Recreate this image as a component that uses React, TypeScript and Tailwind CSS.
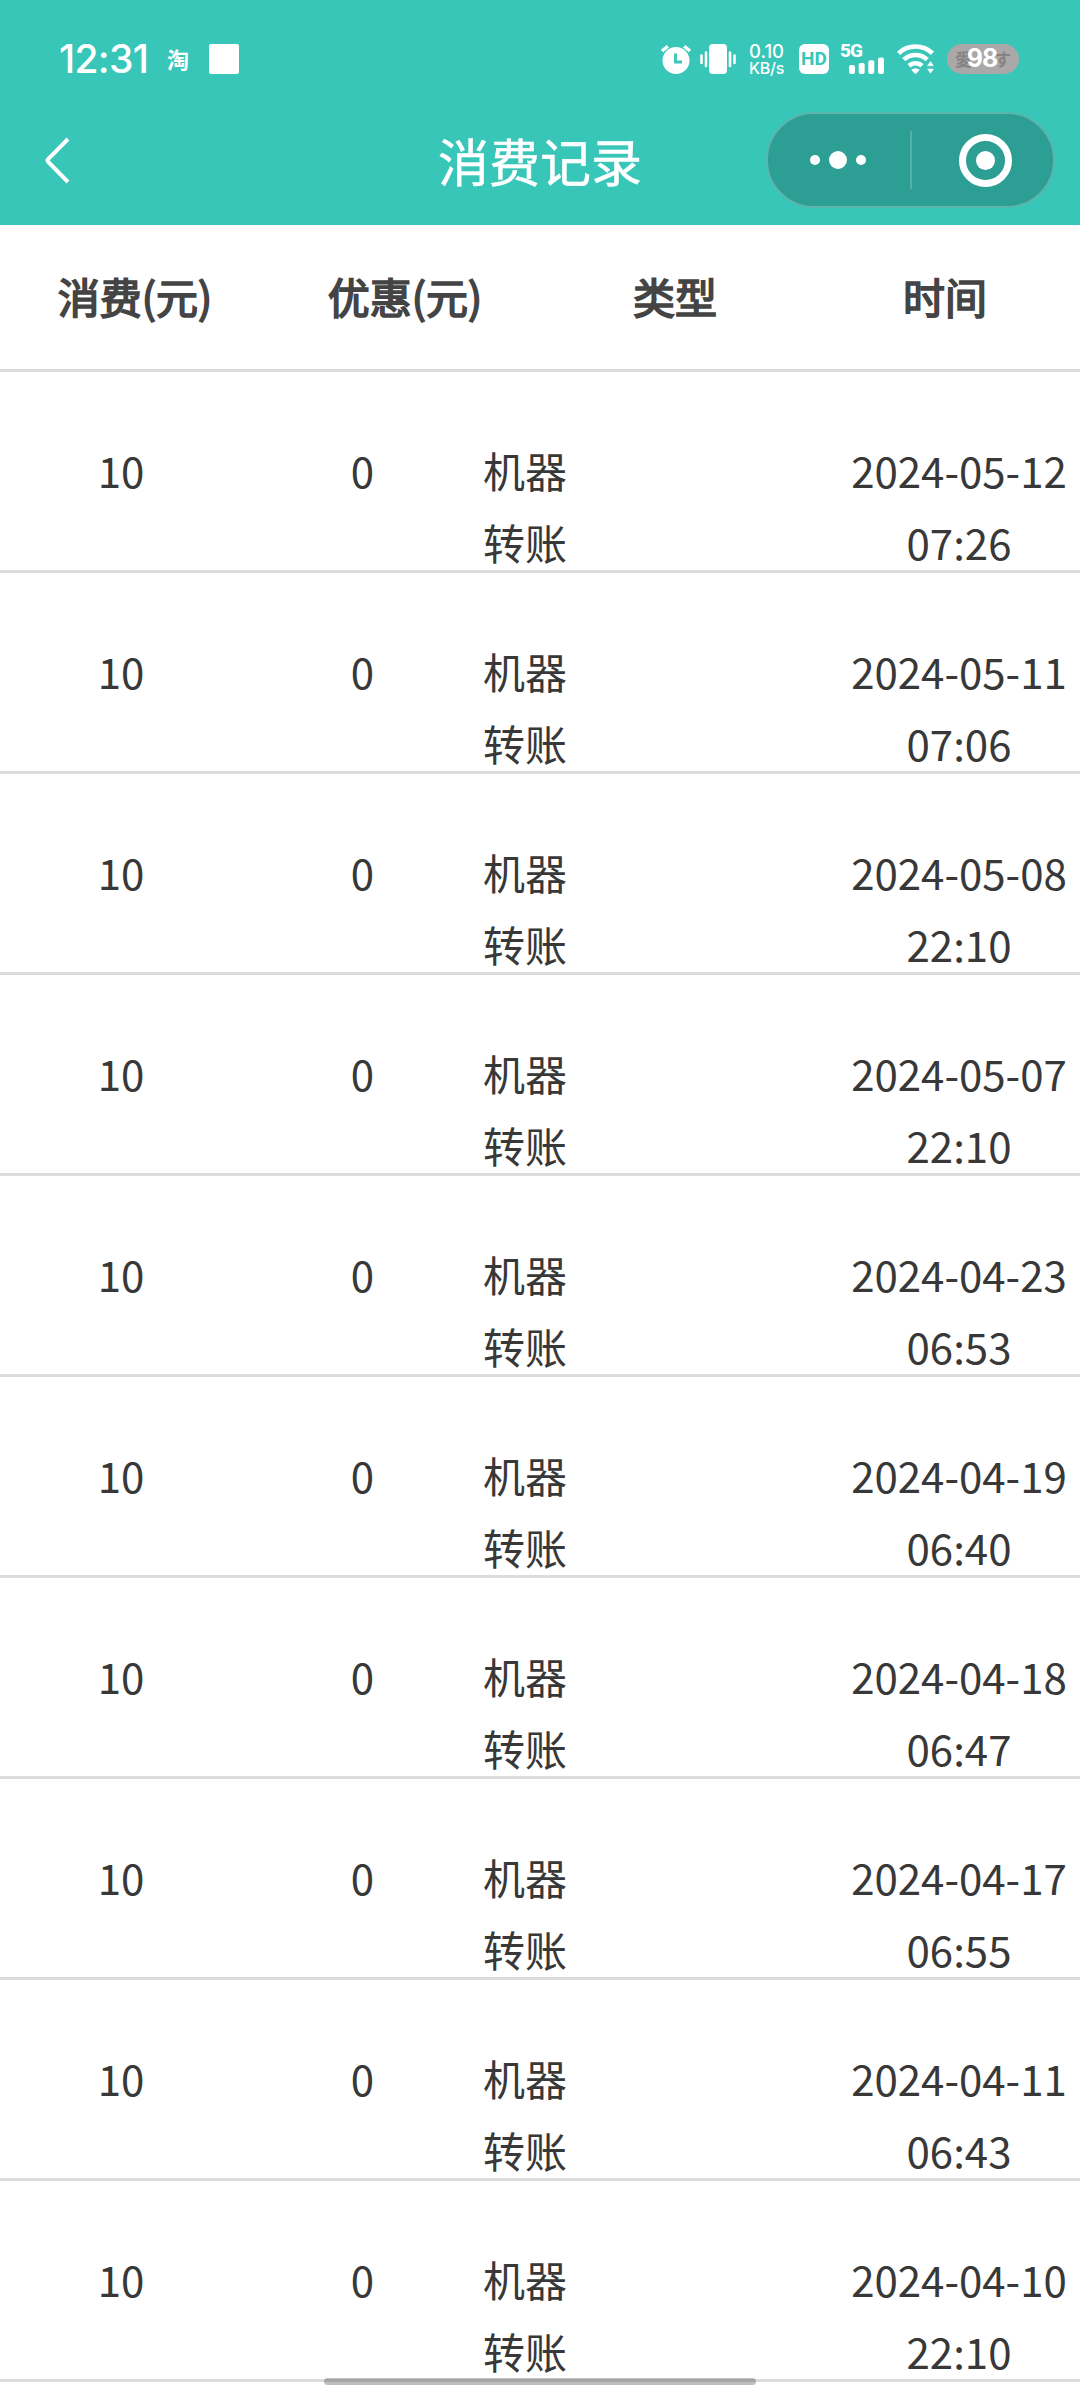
type ExpenseRecord = {
    amount: string;
    discount: string;
    type: string[];
    date: string;
    time: string;
};

const columns = ["消费(元)", "优惠(元)", "类型", "时间"];

const timestamps = [
    ["2024-05-12", "07:26"],
    ["2024-05-11", "07:06"],
    ["2024-05-08", "22:10"],
    ["2024-05-07", "22:10"],
    ["2024-04-23", "06:53"],
    ["2024-04-19", "06:40"],
    ["2024-04-18", "06:47"],
    ["2024-04-17", "06:55"],
    ["2024-04-11", "06:43"],
    ["2024-04-10", "22:10"],
];

const records: ExpenseRecord[] = timestamps.map(([date, time]) => ({
    amount: "10",
    discount: "0",
    type: ["机器", "转账"],
    date,
    time,
}));

function AlarmIcon() {
    return (
        <svg width="32" height="30" viewBox="0 0 32 30" className="shrink-0">
            <circle cx="16" cy="16.5" r="13.5" fill="white" />
            <path d="M2 7 L7.8 2.2 M30 7 L24.2 2.2" stroke="white" strokeWidth="3.4" />
            <path d="M15.5 9.5 V18 H22" fill="none" stroke="#38c6b9" strokeWidth="2.8" />
        </svg>
    );
}

function VibrateIcon() {
    return (
        <svg width="36" height="30" viewBox="0 0 36 30" className="shrink-0">
            <rect x="9" y="0" width="18" height="30" rx="4" fill="white" />
            <path
                d="M1.5 11.5V19M6 8.5V22M30 8.5V22M34.5 11.5V19"
                stroke="white"
                strokeWidth="2.6"
                strokeLinecap="round"
            />
        </svg>
    );
}

function SignalBars() {
    return (
        <svg width="36" height="17" viewBox="0 0 36 17" className="ml-[9px]">
            <rect x="0" y="8" width="6" height="9" rx="2" fill="white" />
            <rect x="9.7" y="6" width="6" height="11" rx="2" fill="white" />
            <rect x="19.3" y="3.3" width="6" height="13.7" rx="2" fill="white" />
            <rect x="29" y="0.5" width="6" height="16.5" rx="2" fill="white" />
        </svg>
    );
}

function WifiIcon() {
    return (
        <svg width="38" height="30" viewBox="0 0 38 30" className="shrink-0">
            <g fill="none" stroke="white" strokeWidth="4.6">
                <path d="M1.5 9.2 A25 25 0 0 1 35.5 9.2" />
                <path d="M6.8 15.6 A17 17 0 0 1 30.2 15.6" />
                <path d="M12 21.8 A9.6 9.6 0 0 1 25 21.8" />
            </g>
            <path d="M14.2 25.8 Q18.5 22.6 22.8 25.8 L19.6 29.2 Q18.5 30.2 17.4 29.2Z" fill="white" />
            <path
                d="M29.6 22.2 L33.5 16.8 L37.4 22.2Z M29.6 24.6 L33.5 30 L37.4 24.6Z"
                fill="white"
                stroke="#38c6b9"
                strokeWidth="0.6"
            />
        </svg>
    );
}

function StatusBar() {
    return (
        <div className="flex h-[118px] items-start pt-[44px] pl-[59px] text-white">
            <div className="w-[108px] whitespace-nowrap font-['Inter'] text-[39px] leading-[30px] font-medium tracking-[-0.7px]">
                12:31
            </div>
            <div className="w-[42px] pt-[3px] font-['Noto_Sans_CJK_SC',sans-serif] text-[22px] leading-[22px] font-bold">
                淘
            </div>
            <div className="h-[30px] w-[30px] rounded-[2px] bg-white" />

            <div className="ml-[421px] flex">
                <AlarmIcon />
                <div className="ml-[8px]">
                    <VibrateIcon />
                </div>
                <div className="ml-[13px] w-[50px] font-['Inter'] font-medium whitespace-nowrap">
                    <div className="text-[18.5px] leading-[15px]">0.10</div>
                    <div className="text-[16px] leading-[18px] tracking-[-0.2px]">KB/s</div>
                </div>
                <div className="flex h-[30px] w-[30px] items-center justify-center rounded-[6px] bg-white font-['Roboto'] text-[19px] font-bold text-[#38c6b9]">
                    HD
                </div>
                <div className="ml-[11px] w-[57px]">
                    <div className="h-[13px] font-['Roboto'] text-[19px] leading-[14px] font-extrabold tracking-[-1px]">5G</div>
                    <SignalBars />
                </div>
                <WifiIcon />
                <div className="relative ml-[12px] h-[30px] w-[72px] overflow-hidden rounded-full bg-[#aaa8a8]">
                    <div className="flex h-full items-center justify-between px-[8px] pb-[1px] font-['Noto_Sans_CJK_JP',sans-serif] text-[17px] font-bold text-[#858383]">
                        <span>愛</span>
                        <span>す</span>
                    </div>
                    <div className="absolute inset-y-0 left-[18px] flex w-[34px] items-center justify-center font-['Inter'] text-[25px] font-bold tracking-[-1px]">
                        98
                    </div>
                </div>
            </div>
        </div>
    );
}

function NavBar() {
    return (
        <div className="relative flex h-[107px] items-start justify-center">
            <svg width="30" height="54" viewBox="0 0 30 54" className="absolute top-[16px] left-[43px]">
                <path
                    d="M25 5 L5.2 25.2 Q4 26.5 5.2 27.8 L25 48"
                    fill="none"
                    stroke="white"
                    strokeWidth="4"
                />
            </svg>
            <h1 className="mt-[4px] font-['Noto_Sans_CJK_SC',sans-serif] text-[51px] leading-[76px] font-normal text-white [-webkit-text-stroke:0.5px_white]">
                消费记录
            </h1>
            <div className="absolute top-[-6px] right-[25px] flex h-[96px] w-[289px] items-center rounded-full border-2 border-[#5bb5ac] bg-[#2d9e94]">
                <div className="flex w-[142px] items-center justify-center gap-[9px] pr-[2px]">
                    <span className="h-[10px] w-[10px] rounded-full bg-white" />
                    <span className="h-[18px] w-[18px] rounded-full bg-white" />
                    <span className="h-[10px] w-[10px] rounded-full bg-white" />
                </div>
                <div className="h-[58px] w-[2px] bg-[#57b1a9]" />
                <div className="flex flex-1 items-center justify-center pl-[6px]">
                    <div className="flex h-[53px] w-[53px] items-center justify-center rounded-full border-[7px] border-white">
                        <span className="h-[19px] w-[19px] rounded-full bg-white" />
                    </div>
                </div>
            </div>
        </div>
    );
}

function RecordRow({ record }: { record: ExpenseRecord }) {
    return (
        <div className="flex h-[201px] border-b-[3px] border-[#dcdcdc] pt-[62px] text-center leading-[72px]">
            <div className="w-[242px]">{record.amount}</div>
            <div className="w-[241px]">{record.discount}</div>
            <div className="w-[84px]">
                {record.type.map((part) => (
                    <div key={part}>{part}</div>
                ))}
            </div>
            <div className="ml-auto w-[242px]">
                <div>{record.date}</div>
                <div>{record.time}</div>
            </div>
        </div>
    );
}

export default function App() {
    return (
        <div className="relative h-[2388px] w-[1080px] overflow-hidden bg-white">
            <header className="h-[225px] bg-[#38c6b9]">
                <StatusBar />
                <NavBar />
            </header>

            <main className="font-['Noto_Sans_CJK_SC',sans-serif] text-[42px] text-[#383838]">
                <div className="grid h-[147px] grid-cols-4 border-b-[3px] border-[#dcdcdc] text-center leading-[142px] text-[#444] [-webkit-text-stroke:1.7px_#444]">
                    {columns.map((label) => (
                        <div key={label}>{label}</div>
                    ))}
                </div>
                {records.map((record) => (
                    <RecordRow key={record.date} record={record} />
                ))}
            </main>

            {/* gesture bar */}
            <div className="absolute bottom-[3px] left-[324px] h-[7px] w-[432px] rounded-full bg-black/25" />
        </div>
    );
}
